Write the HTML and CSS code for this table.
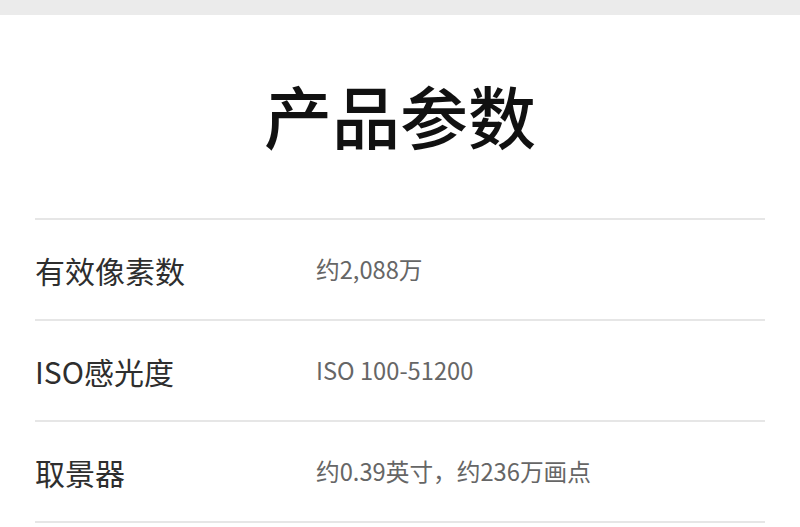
FILE: index.html
```html
<!DOCTYPE html>
<html lang="zh">
<head>
<meta charset="utf-8">
<title>产品参数</title>
<link rel="stylesheet" href="styles.css">
</head>
<body>
<div class="topband"></div>
<header class="title-wrap">
  <h1 class="title">产品参数</h1>
</header>
<section class="specs">
  <div class="row">
    <div class="label">有效像素数</div>
    <div class="value">约2,088万</div>
  </div>
  <div class="row">
    <div class="label">ISO感光度</div>
    <div class="value">ISO 100-51200</div>
  </div>
  <div class="row">
    <div class="label">取景器</div>
    <div class="value">约0.39英寸，约236万画点</div>
  </div>
</section>
</body>
</html>
```

FILE: styles.css
```css
html, body {
  margin: 0;
  padding: 0;
  background: #ffffff;
  font-family: "Noto Sans CJK SC", "Noto Sans", sans-serif;
}

.topband {
  height: 15px;
  background: #ebebeb;
}

.title-wrap {
  height: 203px;
  display: flex;
  justify-content: center;
  align-items: flex-start;
  box-sizing: border-box;
  padding-top: 66px;
}

.title {
  margin: 0;
  font-size: 68px;
  line-height: 1;
  font-weight: 500;
  color: #111111;
  letter-spacing: 0;
}

.specs {
  margin: 0 35px;
  border-bottom: 2px solid #e6e6e6;
}

.row {
  display: grid;
  grid-template-columns: 281px 1fr;
  align-items: center;
  height: 99px;
  border-top: 2px solid #e6e6e6;
}

.label {
  font-size: 30px;
  color: #2e2e2e;
  line-height: 1;
}

.value {
  font-size: 23.7px;
  color: #666666;
  line-height: 1;
}
```
